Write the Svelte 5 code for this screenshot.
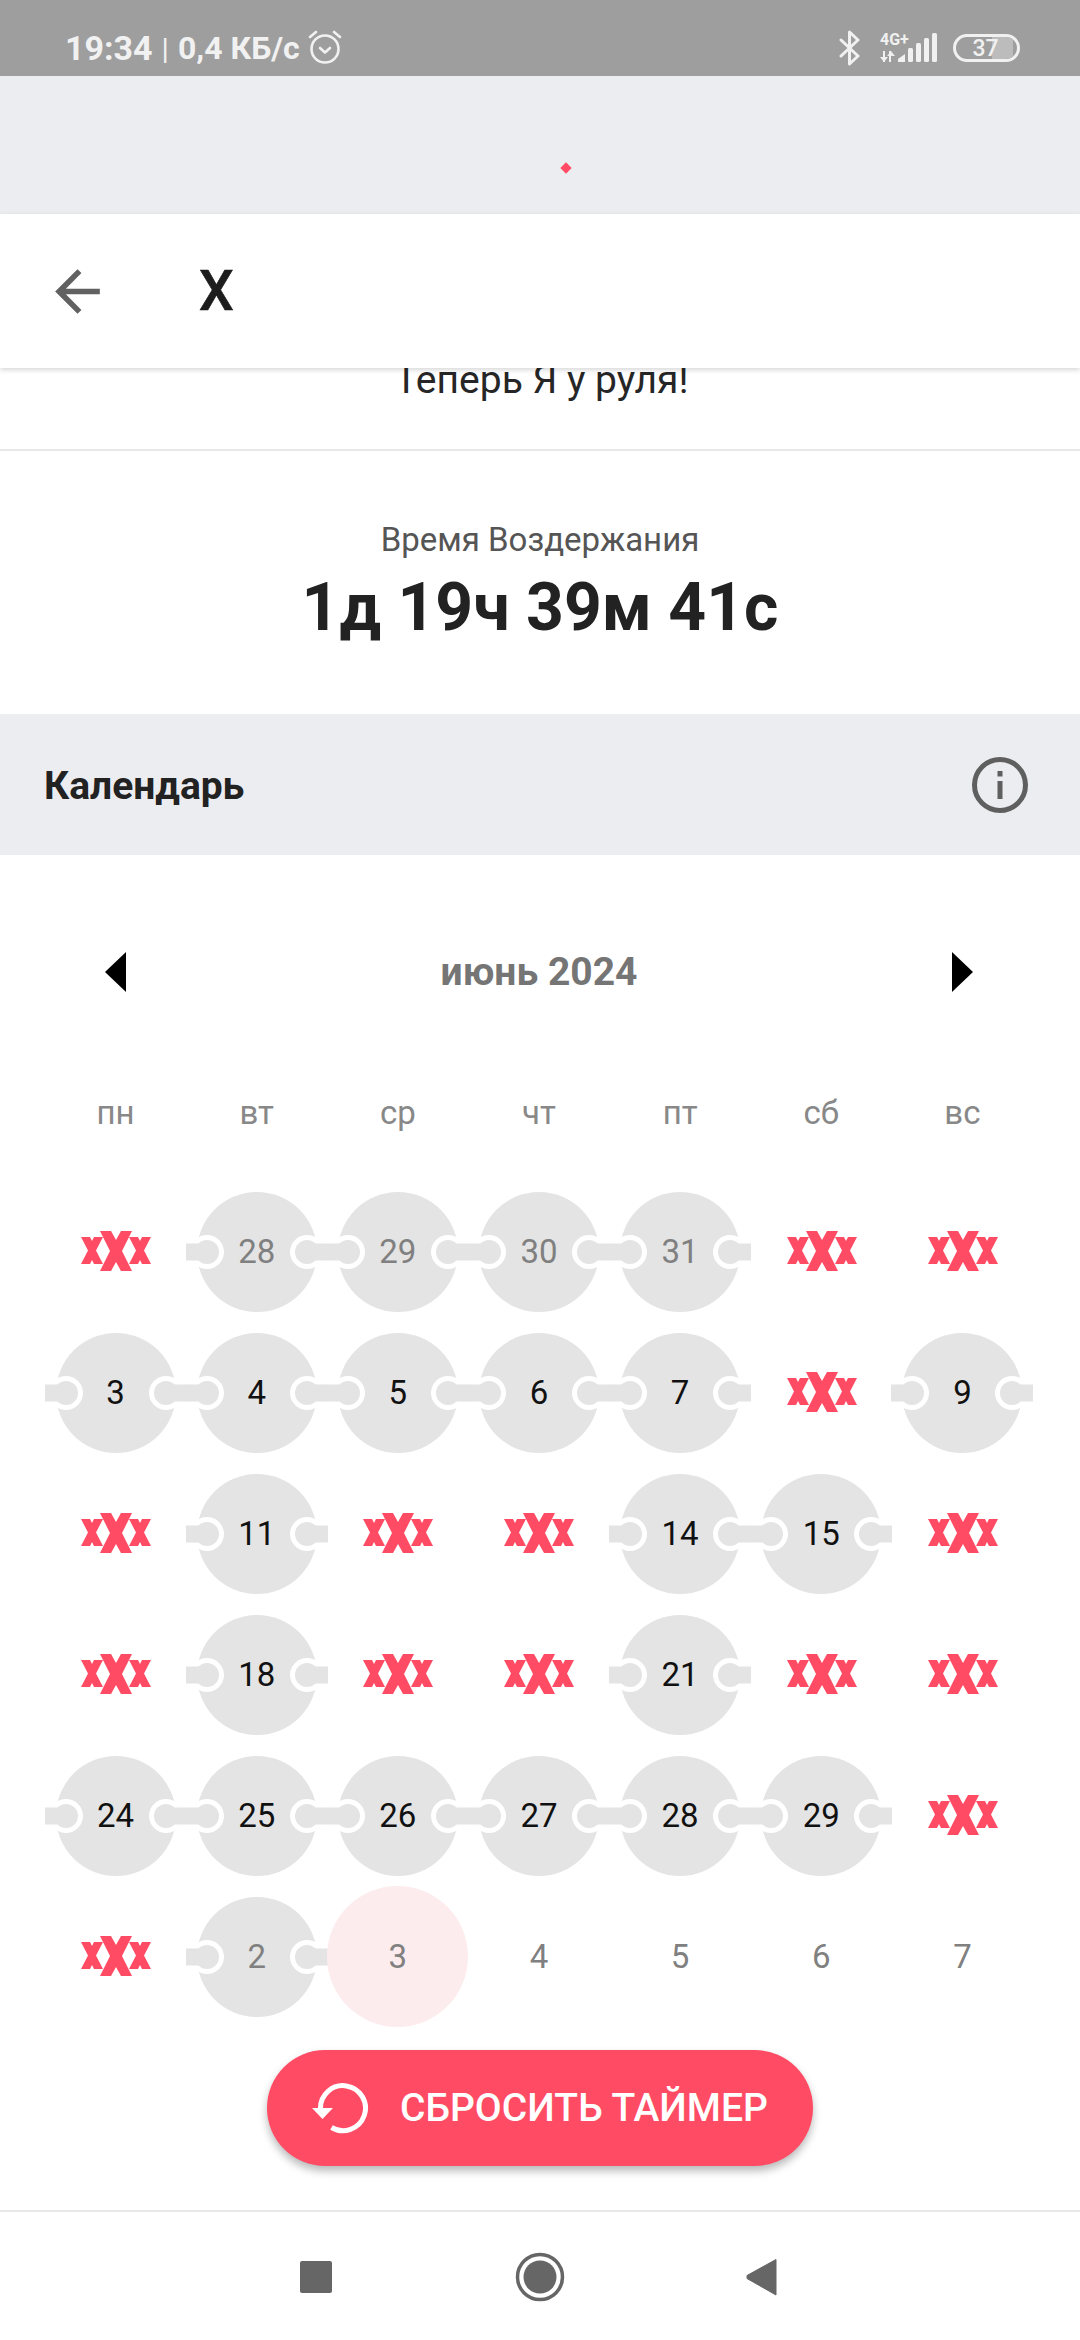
<script>
  const weekdays = ['пн', 'вт', 'ср', 'чт', 'пт', 'сб', 'вс'];
  // kind: x = relapse mark, d = linked day, m = linked day of another month, t = today, p = plain future day
  const rows = [
    [['x'], ['m', 28], ['m', 29], ['m', 30], ['m', 31], ['x'], ['x']],
    [['d', 3], ['d', 4], ['d', 5], ['d', 6], ['d', 7], ['x'], ['d', 9]],
    [['x'], ['d', 11], ['x'], ['x'], ['d', 14], ['d', 15], ['x']],
    [['x'], ['d', 18], ['x'], ['x'], ['d', 21], ['x'], ['x']],
    [['d', 24], ['d', 25], ['d', 26], ['d', 27], ['d', 28], ['d', 29], ['x']],
    [['x'], ['m', 2], ['t', 3], ['p', 4], ['p', 5], ['p', 6], ['p', 7]]
  ];
  const days = rows.flat();
</script>

<div class="screen">
  <div class="status">
    <div class="status-left">
      <span class="time">19:34</span><span class="sep">|</span><span>0,4 КБ/с</span>
      <svg class="alarm" width="34" height="36" viewBox="0 0 34 36" fill="none" stroke="#f1f1f1" stroke-width="2.6">
        <circle cx="17" cy="20" r="13.5" />
        <path d="M12 19l5 4.500 5-4.500" stroke-linecap="round" stroke-linejoin="round" />
        <path d="M2 8l6-5M32 8l-6-5" stroke-linecap="round" />
      </svg>
    </div>
    <div class="status-right">
      <svg class="bt" width="22" height="36" viewBox="0 0 22 36" fill="none" stroke="#f1f1f1" stroke-width="3" stroke-linejoin="round" stroke-linecap="round">
        <path d="M2 10l17 16-8.500 8V2l8.500 8L2 26" />
      </svg>
      <div class="signal">
        <span class="net">4G+</span>
        <svg class="bars" width="58" height="30" viewBox="0 0 58 30" fill="#f1f1f1">
          <rect x="3" y="18" width="2" height="11" />
          <path d="M0 24h8l-4 5z" />
          <rect x="9" y="18" width="2" height="11" />
          <path d="M7 23h8l-4-5z" opacity="0.95" />
          <path d="M18 29v-3l7-5v8z" />
          <rect x="28" y="15" width="5" height="14" rx="1.500" />
          <rect x="36" y="10" width="5" height="19" rx="1.500" />
          <rect x="44" y="5" width="5" height="24" rx="1.500" />
          <rect x="52" y="0" width="5" height="29" rx="1.500" />
        </svg>
      </div>
      <div class="battery">
        <div class="level"></div>
        <span>37</span>
      </div>
    </div>
  </div>

  <div class="banner"><span class="diamond"></span></div>

  <header class="bar">
    <svg class="back" width="67" height="67" viewBox="0 0 24 24" fill="#616161">
      <path d="M20 11H7.830l5.590-5.590L12 4l-8 8 8 8 1.410-1.410L7.830 13H20v-2z" />
    </svg>
    <h1>Х</h1>
  </header>

  <div class="motto"><p>Теперь Я у руля!</p></div>

  <section class="timer">
    <div class="label">Время Воздержания</div>
    <div class="value">1д 19ч 39м 41с</div>
  </section>

  <section class="band">
    <h2>Календарь</h2>
    <svg width="58" height="58" viewBox="0 0 58 58" fill="none">
      <circle cx="29" cy="29" r="25.500" stroke="#5f5f5f" stroke-width="5" />
      <rect x="26.500" y="25" width="5" height="18" fill="#5f5f5f" />
      <rect x="26.500" y="15" width="5" height="5.500" fill="#5f5f5f" />
    </svg>
  </section>

  <section class="calendar">
    <div class="month">
      <svg width="22" height="40" viewBox="0 0 22 40"><path d="M21 0v40L0 20z" /></svg>
      <span>июнь 2024</span>
      <svg width="22" height="40" viewBox="0 0 22 40"><path d="M1 0v40l21-20z" /></svg>
    </div>

    <div class="weekdays">
      {#each weekdays as w}
        <span>{w}</span>
      {/each}
    </div>

    <div class="days">
      {#each days as [kind, n]}
        <div class="cell {kind}">
          {#if kind === 'x'}
            <svg class="mark" width="70" height="40" viewBox="0 0 70 40" fill="#ff4b64">
              <polygon points="0,6 9,6 11,10 13,6 22,6 15,19.500 22,33 13,33 11,29 9,33 0,33 7,19.500" />
              <polygon points="48,6 57,6 59,10 61,6 70,6 63,19.500 70,33 61,33 59,29 57,33 48,33 55,19.500" />
              <polygon points="19,0 30,0 35,9 40,0 51,0 41,20 51,40 40,40 35,31 30,40 19,40 29,20" />
            </svg>
          {:else if kind === 'd' || kind === 'm'}
            <svg class="link" width="142" height="120" viewBox="-71 -60 142 120">
              <circle r="60" fill="#e4e4e4" />
              <circle cx="-50" r="17" fill="#fff" />
              <circle cx="50" r="17" fill="#fff" />
              <circle cx="-50" r="12" fill="#e4e4e4" />
              <circle cx="50" r="12" fill="#e4e4e4" />
              <rect x="-71" y="-8.500" width="21" height="17" fill="#e4e4e4" />
              <rect x="50" y="-8.500" width="21" height="17" fill="#e4e4e4" />
            </svg>
          {:else if kind === 't'}
            <span class="today"></span>
          {/if}
          {#if n}<span class="num">{n}</span>{/if}
        </div>
      {/each}
    </div>

    <button class="reset">
      <svg width="60" height="54" viewBox="0 0 60 54" fill="none">
        <path d="M8.500 28A22.500 22.500 0 1 1 19.500 46.500" stroke="#fff" stroke-width="5" />
        <path d="M0 27h21L10.500 38z" fill="#fff" />
      </svg>
      <span>СБРОСИТЬ ТАЙМЕР</span>
    </button>
  </section>

  <nav class="nav">
    <svg width="64" height="64" viewBox="0 0 64 64"><rect x="16" y="16" width="32" height="32" rx="2" fill="#666" /></svg>
    <svg width="64" height="64" viewBox="0 0 64 64">
      <circle cx="32" cy="32" r="22.500" fill="none" stroke="#666" stroke-width="3.500" />
      <circle cx="32" cy="32" r="16.500" fill="#666" />
    </svg>
    <svg width="64" height="64" viewBox="0 0 64 64"><path d="M15 30.500L44 14.500V50L15 33.500z" fill="#666" stroke="#666" stroke-width="1" stroke-linejoin="round" /></svg>
  </nav>
</div>

<style>
  :global(body) {
    margin: 0;
    background: #fff;
  }
  .screen {
    width: 1080px;
    height: 2340px;
    display: flex;
    flex-direction: column;
    overflow: hidden;
    font-family: Roboto, "Noto Sans", sans-serif;
    background: #fff;
  }
  .status {
    flex: none;
    height: 76px;
    box-sizing: border-box;
    background: #9e9e9e;
    color: #f1f1f1;
    display: flex;
    justify-content: space-between;
    align-items: center;
    padding: 20px 60px 0 65px;
  }
  .status-left {
    display: flex;
    align-items: center;
    font-size: 32px;
    font-weight: 700;
  }
  .time {
    font-size: 34px;
  }
  .sep {
    font-weight: 400;
    margin: 0 9px;
    font-size: 30px;
  }
  .alarm {
    margin-left: 8px;
    margin-top: -2px;
  }
  .status-right {
    display: flex;
    align-items: center;
  }
  .bt {
    margin-right: 19px;
  }
  .signal {
    position: relative;
    width: 58px;
    height: 32px;
    margin-right: 15px;
  }
  .net {
    position: absolute;
    left: 0;
    top: -1px;
    font-size: 16px;
    font-weight: 700;
    line-height: 17px;
  }
  .bars {
    position: absolute;
    left: 0;
    top: 1px;
  }
  .battery {
    position: relative;
    width: 67px;
    height: 28px;
    box-sizing: border-box;
    border: 3px solid #f1f1f1;
    border-radius: 14px;
    display: flex;
    align-items: center;
    justify-content: center;
    font-size: 23px;
    font-weight: 500;
    overflow: hidden;
  }
  .level {
    position: absolute;
    left: 0;
    top: 0;
    bottom: 0;
    right: 0;
    background: linear-gradient(90deg, transparent 0 36px, #bcbcbc 36px 57px, transparent 57px);
    border-radius: 10px;
  }
  .battery span {
    position: relative;
    margin-right: 2px;
  }

  .banner {
    flex: none;
    height: 138px;
    box-sizing: border-box;
    background: #ecedf1;
    display: flex;
    justify-content: center;
    padding: 88px 0 0 52px;
  }
  .diamond {
    width: 8px;
    height: 8px;
    background: #ff4b64;
    transform: rotate(45deg);
  }

  .bar {
    flex: none;
    position: relative;
    z-index: 2;
    height: 154px;
    box-sizing: border-box;
    background: #fff;
    display: flex;
    align-items: center;
    padding: 0 0 0 44px;
    box-shadow: 0 2px 5px rgba(0, 0, 0, 0.16);
  }
  .back {
    margin-right: 88px;
  }
  .bar h1 {
    margin: 0;
    font-size: 55px;
    font-weight: 500;
    color: #1d1d1d;
    -webkit-text-stroke: 0.6px #1d1d1d;
  }

  .motto {
    flex: none;
    height: 83px;
    box-sizing: border-box;
    border-bottom: 2px solid #e8e8e8;
  }
  .motto p {
    margin: -10px 0 0 3px;
    text-align: center;
    font-size: 39px;
    line-height: 44px;
    color: #262626;
  }

  .timer {
    flex: none;
    height: 263px;
    box-sizing: border-box;
    padding-top: 69px;
    text-align: center;
  }
  .label {
    font-size: 33px;
    line-height: 40px;
    color: #555;
  }
  .value {
    font-size: 66px;
    line-height: 80px;
    font-weight: 700;
    color: #222;
    margin-top: 8px;
  }

  .band {
    flex: none;
    height: 141px;
    box-sizing: border-box;
    background: #ecedf1;
    display: flex;
    justify-content: space-between;
    align-items: center;
    padding: 0 51px 0 44px;
  }
  .band h2 {
    margin: 2px 0 0;
    font-size: 39px;
    font-weight: 700;
    color: #222;
  }

  .calendar {
    position: relative;
    flex: 1;
    min-height: 0;
    padding: 0 47px 0 45px;
  }
  .month {
    display: flex;
    align-items: center;
    justify-content: space-between;
    height: 234px;
    padding: 0 0 0 60px;
    margin-right: 60px;
    box-sizing: border-box;
  }
  .month span {
    font-size: 39px;
    font-weight: 700;
    color: #757575;
  }
  .weekdays,
  .days {
    display: grid;
    grid-template-columns: repeat(7, 1fr);
  }
  .weekdays {
    height: 58px;
    margin-top: -6px;
    align-items: center;
    text-align: center;
    font-size: 33px;
    color: #888;
  }
  .days {
    grid-auto-rows: 141px;
    margin-top: 40px;
  }
  .cell {
    position: relative;
    display: flex;
    align-items: center;
    justify-content: center;
  }
  .mark {
    margin: -1px 0 0 1px;
  }
  .link {
    position: absolute;
    left: 50%;
    top: 50%;
    margin: -60px 0 0 -71px;
  }
  .today {
    position: absolute;
    z-index: 1;
    left: 50%;
    top: 50%;
    width: 141px;
    height: 141px;
    margin: -70.500px 0 0 -70.500px;
    border-radius: 50%;
    background: #fdecee;
  }
  .num {
    position: relative;
    z-index: 2;
    font-size: 33px;
    color: #111;
  }
  .m .num,
  .t .num,
  .p .num {
    color: #808080;
  }

  .reset {
    position: absolute;
    left: 267px;
    top: 1195px;
    width: 546px;
    height: 116px;
    border: 0;
    border-radius: 58px;
    background: #ff4b64;
    color: #fff;
    font-family: inherit;
    font-size: 39px;
    font-weight: 500;
    display: flex;
    align-items: center;
    padding: 0 0 0 45px;
    box-sizing: border-box;
    box-shadow: 0 5px 9px rgba(0, 0, 0, 0.28);
    z-index: 3;
  }
  .reset span {
    margin-left: 28px;
  }

  .nav {
    flex: none;
    height: 130px;
    box-sizing: border-box;
    border-top: 2px solid #e8e8e8;
    display: flex;
    justify-content: center;
    gap: 160px;
    padding-top: 33px;
    background: #fff;
  }
</style>
